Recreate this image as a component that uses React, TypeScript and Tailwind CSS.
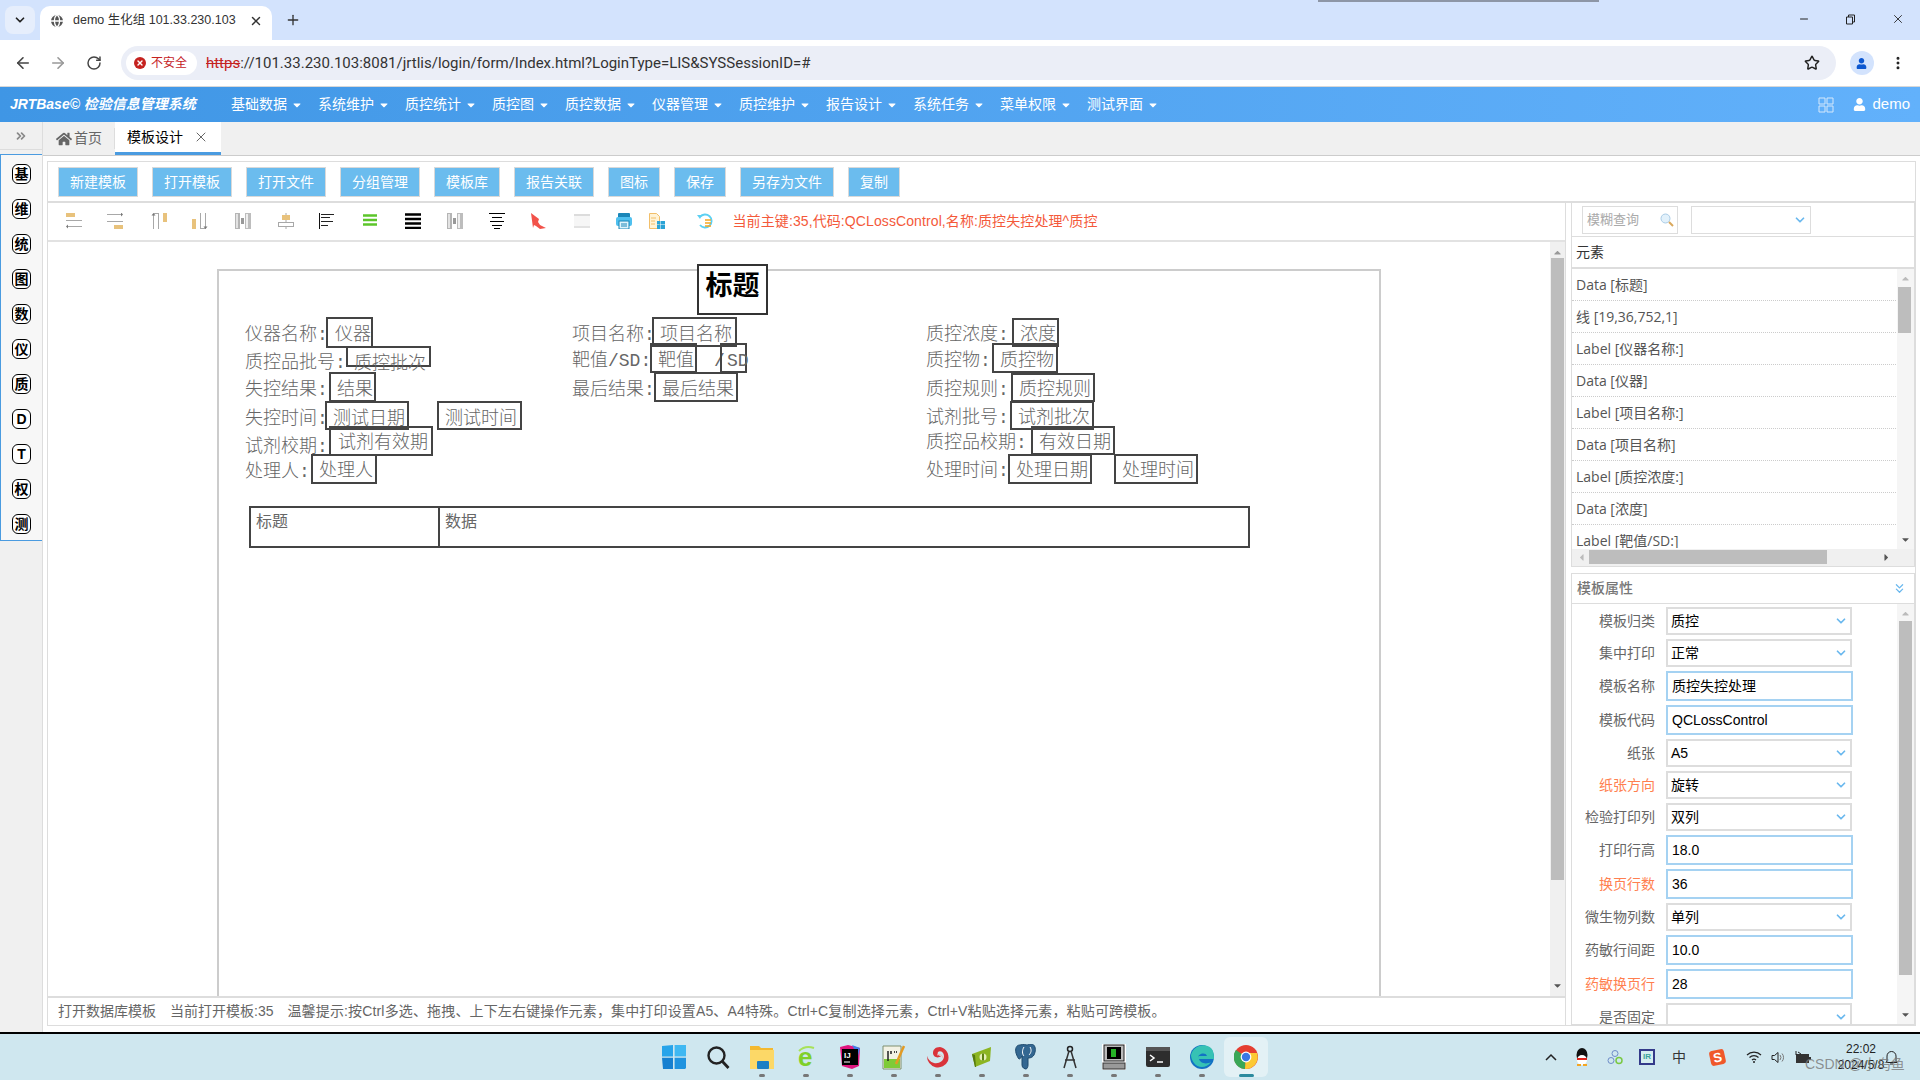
import React from 'react';
import { ArrowLeft, ArrowRight, ChevronDown, ChevronsDown, ChevronsRight, Globe, Minus, MoreVertical, Plus, RotateCw, Star, X } from 'lucide-react';
import { FaHome, FaUser, FaCaretDown, FaCaretUp, FaCaretLeft, FaCaretRight } from 'react-icons/fa';

const menus = ['基础数据', '系统维护', '质控统计', '质控图', '质控数据', '仪器管理', '质控维护', '报告设计', '系统任务', '菜单权限', '测试界面'];
const sideItems = ['基', '维', '统', '图', '数', '仪', '质', 'D', 'T', '权', '测'];
const buttons = ['新建模板', '打开模板', '打开文件', '分组管理', '模板库', '报告关联', '图标', '保存', '另存为文件', '复制'];
const elements = ['Data [标题]', '线 [19,36,752,1]', 'Label [仪器名称:]', 'Data [仪器]', 'Label [项目名称:]', 'Data [项目名称]', 'Label [质控浓度:]', 'Data [浓度]', 'Label [靶值/SD:]'];

// 工具图标之间的间距
const iconGaps = [0, 25, 27.5, 25, 27, 27, 25, 27, 27, 26, 26, 25, 28, 26.5, 17, 31.5];

const props = [
  { label: '模板归类', value: '质控', select: true },
  { label: '集中打印', value: '正常', select: true },
  { label: '模板名称', value: '质控失控处理' },
  { label: '模板代码', value: 'QCLossControl' },
  { label: '纸张', value: 'A5', select: true },
  { label: '纸张方向', value: '旋转', select: true, warn: true },
  { label: '检验打印列', value: '双列', select: true },
  { label: '打印行高', value: '18.0' },
  { label: '换页行数', value: '36', warn: true },
  { label: '微生物列数', value: '单列', select: true },
  { label: '药敏行间距', value: '10.0' },
  { label: '药敏换页行', value: '28', warn: true },
  { label: '是否固定', value: '', select: true },
];

const labels: [number, number, string][] = [
  [245, 334, '仪器名称:'], [245, 362, '质控品批号:'], [245, 389, '失控结果:'], [245, 418, '失控时间:'], [245, 446, '试剂校期:'], [245, 471, '处理人:'],
  [572, 334, '项目名称:'], [572, 360, '靶值/SD:'], [572, 389, '最后结果:'], [714, 360, '/'],
  [926, 334, '质控浓度:'], [926, 360, '质控物:'], [926, 389, '质控规则:'], [926, 417, '试剂批号:'], [926, 442, '质控品校期:'], [926, 470, '处理时间:'],
];

// [左, 上, 右, 下, 文本x, 文本中心y, 文本]
const boxes: [number, number, number, number, number, number, string][] = [
  [326, 317, 372, 347, 335, 334, '仪器'], [346, 346, 430, 366, 354, 363, '质控批次'], [329, 372, 375, 401, 337, 389, '结果'],
  [325, 401, 408, 429, 333, 418, '测试日期'], [437, 401, 521, 429, 445, 418, '测试时间'], [329, 426, 432, 455, 338, 442, '试剂有效期'], [311, 454, 376, 483, 319, 470, '处理人'],
  [652, 317, 736, 346, 660, 334, '项目名称'], [650, 343, 696, 372, 658, 360, '靶值'], [720, 343, 746, 372, 727, 360, 'SD'], [654, 372, 737, 401, 662, 389, '最后结果'],
  [1012, 318, 1058, 346, 1020, 334, '浓度'], [992, 343, 1057, 372, 1000, 360, '质控物'], [1011, 373, 1094, 401, 1019, 389, '质控规则'], [1010, 401, 1093, 429, 1018, 417, '试剂批次'],
  [1031, 426, 1114, 454, 1039, 442, '有效日期'], [1008, 454, 1091, 483, 1016, 470, '处理日期'], [1114, 454, 1197, 483, 1122, 470, '处理时间'],
];

const ORIGIN_X = 48;
const ORIGIN_Y = 242;

function Bars() {
  return (
    <svg width="16" height="16" viewBox="0 0 16 16">
      <rect x="0" y="0" width="5" height="16" fill="#b5b5b5" />
      <rect x="1" y="1" width="2" height="14" fill="#e3e3e3" />
      <rect x="6" y="5" width="3" height="6" fill="#999" />
      <rect x="10" y="0" width="6" height="16" fill="#bdbdbd" />
      <rect x="11" y="1" width="2" height="14" fill="#efefef" />
    </svg>
  );
}

function ToolIcon({ n }: { n: number }) {
  const tan = '#e8c27c';
  const g = '#a8a8a8';
  if (n === 0) return <svg width="16" height="16" viewBox="0 0 16 16"><rect x="0" y="0" width="9" height="4" fill={tan} /><path d="M0 7.5h16M2 13.5h14" stroke={g} /><path d="M0 13.5l2-2v4z" fill="#777" /></svg>;
  if (n === 1) return <svg width="16" height="16" viewBox="0 0 16 16"><rect x="7" y="12" width="9" height="4" fill={tan} /><path d="M0 1.5h14M0 8.5h16" stroke={g} /><path d="M16 1.5l-2-2v4z" fill="#777" /></svg>;
  if (n === 2) return <svg width="16" height="16" viewBox="0 0 16 16"><rect x="12" y="0" width="4" height="9" fill={tan} /><path d="M2.5 1v15M7.5 0v16M2.500.5h5" stroke={g} /><path d="M2.500 0l-2 2.500h4z" fill="#777" /></svg>;
  if (n === 3) return <svg width="16" height="16" viewBox="0 0 16 16"><rect x="0" y="6" width="4" height="10" fill={tan} /><path d="M8.5 0v15M13.5 0v15M8 15.500h6" stroke={g} /><path d="M13.500 16l-2-2.500h4z" fill="#777" /></svg>;
  if (n === 4 || n === 9) return <Bars />;
  if (n === 5) return <svg width="16" height="16" viewBox="0 0 16 16"><path d="M8 0v16" stroke={g} /><rect x="4" y="2" width="8" height="5" fill={tan} /><rect x=".5" y="9.5" width="15" height="4" fill="#fff" stroke={g} /></svg>;
  if (n === 6) return <svg width="16" height="16" viewBox="0 0 16 16"><path d="M.5 0v16" stroke="#111" /><path d="M2 1.5h13M2 4.5h9M2 8.5h12M2 12.5h7" stroke="#222" /></svg>;
  if (n === 7) return <svg width="16" height="16" viewBox="0 0 16 16"><path d="M1 2.5h14M1 7h14M1 11.5h14" stroke="#5cc52a" strokeWidth="2.4" /></svg>;
  if (n === 8) return <svg width="16" height="16" viewBox="0 0 16 16"><path d="M0 1.5h16M0 6h16M0 10.5h16M0 15h16" stroke="#000" strokeWidth="2.6" /></svg>;
  if (n === 10) return <svg width="16" height="16" viewBox="0 0 16 16"><path d="M0 .5h16M3 4.5h10M1 8.5h14M3 12.5h10M5 15.5h6" stroke="#000" /></svg>;
  if (n === 11) return <svg width="16" height="16" viewBox="0 0 16 16"><path d="M1 0l8 6-1 3 2 3 6 3-6 1-4-3-2-1-1 3z" fill="#f2524a" /></svg>;
  if (n === 12) return <svg width="16" height="16" viewBox="0 0 16 16"><rect x="0" y="2" width="16" height="13" fill="#f6f6f6" /><rect x="0" y="1" width="16" height="2" fill="#dcdcdc" /><rect x="0" y="13" width="16" height="2" fill="#e2e2e2" /></svg>;
  if (n === 13) return <svg width="16" height="16" viewBox="0 0 16 16"><rect x="2" y="0" width="12" height="5" rx="1" fill="#1a86b8" /><rect x="0" y="4" width="16" height="9" rx="2" fill="#4fc0ef" /><rect x="3" y="8" width="10" height="8" fill="#dff3fb" stroke="#1a86b8" /><path d="M5 11h6M5 13h6" stroke="#1a86b8" /></svg>;
  if (n === 14) return <svg width="16" height="16" viewBox="0 0 16 16"><path d="M.5.5h7l3 3v12h-10z" fill="#fff3d6" stroke="#f2bf6a" /><path d="M2 5h5M2 8h4M2 11h4" stroke="#f2bf6a" /><path d="M8 8h3.5v3.5H8zM12 8h4v3.5h-4zM8 12h3.5v4H8zM12 12h4v4h-4z" fill="#2ba3d6" /></svg>;
  return <svg width="16" height="16" viewBox="0 0 16 16"><path d="M3 4a6.5 6.5 0 1 1 0 8" fill="none" stroke="#5cd0f2" strokeWidth="1.8" /><path d="M0 2l5 0-2 4z" fill="#5cd0f2" /><path d="M8 7h6M8 10h6M8 13h6" stroke="#f5a623" strokeWidth="1.5" /></svg>;
}

function TaskIcon({ n }: { n: number }) {
  if (n === 0) return <svg width="24" height="24" viewBox="0 0 24 24"><path d="M0 1l11-1v11.400H0z" fill="#27a4ea" /><path d="M12.600 0L24 0v11.400H12.600z" fill="#3fb8f2" /><path d="M0 12.800h11V24H1z" fill="#1680d0" /><path d="M12.600 12.800H24V23l-1 1H12.600z" fill="#1f93df" /></svg>;
  if (n === 1) return <svg width="24" height="24" viewBox="0 0 24 24"><circle cx="10.500" cy="10.500" r="8" fill="none" stroke="#222" strokeWidth="2.400" /><path d="M16 16l6.500 7" stroke="#222" strokeWidth="2.800" /></svg>;
  if (n === 2) return <svg width="26" height="24" viewBox="0 0 26 24"><path d="M1 1h9l2 2h12v21H1z" fill="#f4b92f" /><path d="M1 5h24v19H1z" fill="#fcd867" /><rect x="8" y="16" width="12" height="8" rx="1" fill="#1b7fc4" /></svg>;
  if (n === 3) return <svg width="24" height="26" viewBox="0 0 24 26" className="overflow-visible"><path d="M20 4q-9-3-15 3" fill="none" stroke="#a8e25a" strokeWidth="2" /><text x="4" y="22" fontSize="26" fontWeight="700" fill="#7fd02a" fontFamily="Liberation Sans">e</text></svg>;
  if (n === 4) return <svg width="24" height="24" viewBox="0 0 24 24"><path d="M2 2l8-2 12 3-1 18-7 3-10-3z" fill="#e0157e" /><path d="M14 0l8 3-2 8z" fill="#3f7ee8" /><rect x="4" y="4" width="16" height="16" fill="#000" /><text x="6" y="13" fill="#fff" fontSize="8" fontWeight="700" fontFamily="Liberation Sans">IJ</text><path d="M6 17h6" stroke="#fff" /></svg>;
  if (n === 5) return <svg width="24" height="26" viewBox="0 0 24 26"><path d="M1 2h18v23H1z" fill="#f2f2e4" stroke="#7f8f6f" /><rect x="2" y="15" width="16" height="9" fill="#7ecb37" /><path d="M6 7v10M9 7v3" stroke="#222" strokeWidth="1.500" /><path d="M12 8h3" stroke="#444" strokeDasharray="1 1" strokeWidth="2" /><path d="M14 20L22 2" stroke="#e39b24" strokeWidth="2.500" /></svg>;
  if (n === 6) return <svg width="24" height="22" viewBox="0 0 24 22"><path d="M1 10a11 11 0 0 0 21 5C24 8 20 2 14 1 9 1 7 4 7 7c0 4 5 6 8 3-3 0-4-2-3-4 2-2 6 0 6 4 0 5-5 8-10 7-4-1-6-4-7-7z" fill="#d9333a" /><path d="M11 9a4 4 0 0 1 6 3" fill="none" stroke="#f6b7b7" /></svg>;
  if (n === 7) return <svg width="22" height="20" viewBox="0 0 22 20"><path d="M1 7l19-7-1 14L4 20z" fill="#8cb521" /><path d="M1 7l3 1 1 12H4z" fill="#567a0f" /><circle cx="12" cy="10" r="3.500" fill="#e4efb7" /><rect x="11" y="6.500" width="2" height="7" fill="#5c8212" /></svg>;
  if (n === 8) return <svg width="22" height="26" viewBox="0 0 22 26"><path d="M5 1C1 1 0 5 1 9c1 3 2 5 3 6 1 0 2-1 3-3v9c0 3 3 4 4 4s2-2 2-4v-7c3 0 6-1 7-6 1-3 0-8-4-8-2 0-3 1-4 1s-3-1-7 0z" fill="#336791" stroke="#1e4a6d" /><path d="M9 3c-2 3-2 7 0 9M15 3c2 3 1 6-1 8" fill="none" stroke="#fff" /></svg>;
  if (n === 9) return <svg width="16" height="24" viewBox="0 0 16 24"><circle cx="8" cy="4" r="2.500" fill="none" stroke="#222" strokeWidth="1.500" /><path d="M7 6L2 23M9 6l5 17M3 15h10" stroke="#333" strokeWidth="1.500" fill="none" /></svg>;
  if (n === 10) return <svg width="24" height="26" viewBox="0 0 24 26"><rect x="0" y="0" width="24" height="26" fill="#fff" /><rect x="2" y="1" width="20" height="16" fill="#bbb" stroke="#222" /><rect x="5" y="3" width="14" height="12" fill="#000" /><rect x="9" y="5" width="5" height="8" fill="#2fe02f" opacity=".8" /><rect x="1" y="19" width="22" height="6" fill="#999" stroke="#333" /></svg>;
  if (n === 11) return <svg width="24" height="20" viewBox="0 0 24 20"><rect width="24" height="20" rx="2" fill="#2d2d2d" /><rect width="24" height="4" fill="#555" /><path d="M4 8l4 3-4 3" fill="none" stroke="#fff" strokeWidth="1.500" /><path d="M11 15h6" stroke="#fff" strokeWidth="1.500" /></svg>;
  if (n === 12) return <svg width="24" height="26" viewBox="0 0 24 26"><circle cx="12" cy="13" r="12" fill="#1272c4" /><path d="M1 11C3 2 14-2 21 4c3 3 3 8 3 11H9c1 4 7 6 12 3-4 6-13 7-17 1-3-4-3-8-3-8z" fill="#36c2b4" /><path d="M8 14c0-5 8-6 9-2H8z" fill="#1272c4" /></svg>;
  return <svg width="24" height="26" viewBox="0 0 24 24"><circle cx="12" cy="12" r="12" fill="#e53e30" /><path d="M12 12L2 5a12 12 0 0 0 9 19z" fill="#3aa757" /><path d="M12 8h11a12 12 0 0 1-12 16z" fill="#fcc934" /><circle cx="12" cy="12" r="5.400" fill="#fff" /><circle cx="12" cy="12" r="4.200" fill="#3b78e7" /></svg>;
}

function Chevron() {
  return <ChevronDown size={14} strokeWidth={3} className="text-[#6ab8ee]" />;
}

function PropRow({ label, value, select, warn }: { label: string; value: string; select?: boolean; warn?: boolean }) {
  return (
    <div className="flex items-center shrink-0">
      <div className={`w-[82px] text-right text-[14px] ${warn ? 'text-[#ff7f50]' : 'text-[#666]'}`}>{label}</div>
      {select ? (
        <div className="ml-[11px] w-[186px] h-[28px] border-2 border-[#ddd] flex items-center justify-between pl-[3px] pr-[2px] text-[14px] text-black bg-white">
          <span>{value}</span>
          <Chevron />
        </div>
      ) : (
        <div className="ml-[11px] w-[187px] h-[30px] border-2 border-[#a5d2f2] flex items-center pl-[4px] text-[14px] text-black bg-white">{value}</div>
      )}
    </div>
  );
}

export default function App() {
  return (
    <div className="relative w-[1920px] h-[1080px] overflow-hidden flex flex-col bg-white text-[14px] font-['Liberation_Sans','Noto_Sans_CJK_SC',sans-serif]">
      {/* 浏览器标签栏 */}
      <div className="relative h-[40px] shrink-0 bg-[#d3e3fd] flex items-end pl-[5px]">
        <div className="absolute left-[1318px] top-0 w-[281px] h-[2px] bg-[#8d96a6]" />
        <div className="w-[30px] h-[28px] mb-[6px] rounded-lg bg-[#e6eefc] flex items-center justify-center">
          <ChevronDown size={14} strokeWidth={3} className="text-[#222]" />
        </div>
        <div className="ml-[5px] w-[232px] h-[34px] bg-white rounded-t-[10px] flex items-center pl-[9px] pr-[9px] pb-[5px]">
          <Globe size={16} className="text-white fill-[#555]" />
          <span className="ml-[8px] text-[12.5px] text-[#333] flex-1 whitespace-nowrap">demo 生化组 101.33.230.103</span>
          <X size={14} strokeWidth={2.5} className="text-[#333]" />
        </div>
        <Plus size={16} strokeWidth={2} className="ml-[13px] mb-[12px] text-[#333]" />
        <div className="ml-auto mb-[14px] flex items-center gap-[35px] pr-[15px] text-[#222]">
          <Minus size={12} strokeWidth={2} />
          <svg width="11" height="11" viewBox="0 0 11 11"><path d="M1.500 3h6v7h-6zM3.500 3V1h6v7h-2" fill="none" stroke="#222" /></svg>
          <X size={14} strokeWidth={1.5} />
        </div>
      </div>
      {/* 地址栏 */}
      <div className="h-[47px] shrink-0 bg-white border-b border-[#d8d8d8] flex items-center pl-[14px] pr-[14px] text-[#444]">
        <ArrowLeft size={18} strokeWidth={2.2} />
        <ArrowRight size={18} strokeWidth={2.2} className="ml-[17px] text-[#999]" />
        <RotateCw size={16} strokeWidth={2.2} className="ml-[19px]" />
        <div className="ml-[19px] w-[1716px] h-[34px] rounded-full bg-[#ebeef7] flex items-center pl-[5px]">
          <div className="w-[71px] h-[24px] rounded-full bg-white flex items-center pl-[8px] text-[12px] text-[#c5221f]">
            <span className="w-[12px] h-[12px] rounded-full bg-[#c5221f] text-white flex items-center justify-center"><X size={8} strokeWidth={4} /></span>
            <span className="ml-[5px]">不安全</span>
          </div>
          <div className="ml-[9px] text-[15px] text-[#333] font-['Roboto',sans-serif] flex-1 whitespace-nowrap">
            <span className="text-[#c5221f] line-through">https</span>://101.33.230.103:8081/jrtlis/login/form/Index.html?LoginType=LIS&amp;SYSSessionID=#
          </div>
          <Star size={16} strokeWidth={2.2} className="mr-[16px] text-[#222]" />
        </div>
        <div className="ml-[14px] w-[24px] h-[24px] rounded-full bg-[#d3e3fd] flex items-center justify-center text-[#0b57d0]"><FaUser size={11} /></div>
        <MoreVertical size={16} strokeWidth={2.5} className="ml-[16px] text-[#222]" />
      </div>
      {/* 系统导航 */}
      <div className="h-[35px] shrink-0 bg-linear-to-r from-[#3f96e5] to-[#62b1fb] text-white flex items-center">
        <div className="w-[231px] pl-[10px] font-bold italic text-[14px] whitespace-nowrap">JRTBase© 检验信息管理系统</div>
        <div className="flex items-center">
          {menus.map((m) => (
            <div key={m} className="flex items-center pr-[9px] text-[14px] whitespace-nowrap">
              {m}
              <FaCaretDown size={12} className="ml-[4px] mr-[6px]" />
            </div>
          ))}
        </div>
        <div className="ml-auto flex items-center pr-[10px]">
          <svg width="16" height="16" viewBox="0 0 16 16" className="mr-[19px]"><path d="M1 1h6v6H1zM9 1h6v6H9zM1 9h6v6H1zM9 9h6v6H9z" fill="none" stroke="#d5e8fb" /></svg>
          <FaUser size={13} />
          <span className="ml-[6px] text-[15px]">demo</span>
        </div>
      </div>
      {/* 主体 */}
      <div className="flex-1 min-h-0 flex bg-[#f0f0f0]">
        {/* 左侧收缩栏 */}
        <div className="w-[43px] shrink-0 border-r border-[#ddd] flex flex-col">
          <div className="h-[28px] border-b border-[#ddd] flex items-center justify-center">
            <ChevronsRight size={14} strokeWidth={3} className="text-[#888]" />
          </div>
          <div className="mt-[4px] h-[387px] bg-[#f7f7f7] border-y border-l border-[#4a9be0] flex flex-col items-center gap-[15px] pt-[9px]">
            {sideItems.map((s) => (
              <div key={s} className="w-[19px] h-[20px] shrink-0 border border-black rounded-[6px] flex items-center justify-center text-[14px] font-bold text-black bg-white">{s}</div>
            ))}
          </div>
        </div>
        <div className="flex-1 min-w-0 flex flex-col">
          {/* 页签 */}
          <div className="h-[34px] shrink-0 border-b border-[#ccc] flex items-stretch">
            <div className="w-[71px] flex items-center pl-[13px] text-[#666]">
              <FaHome size={16} />
              <span className="ml-[2px] text-[14px]">首页</span>
            </div>
            <div className="w-[1px] my-[6px] bg-[#ddd]" />
            <div className="w-[106px] bg-white border-b-[3px] border-[#4a9be0] flex items-center pl-[12px] text-black">
              <span>模板设计</span>
              <X size={16} strokeWidth={1.5} className="ml-[10px] text-[#666]" />
            </div>
          </div>
          {/* 工作区 */}
          <div className="flex-1 min-h-0 bg-white pl-[4px] pr-[4px] pt-[5px] pb-[6px] flex flex-col">
            <div className="flex-1 min-h-0 border border-[#ddd] flex flex-col">
              <div className="h-[41px] shrink-0 border-b-2 border-[#ddd] flex items-center gap-[14px] pl-[10px] pt-[1px]">
                {buttons.map((b) => (
                  <div key={b} className="h-[30px] px-[11px] border border-[#d9d9d9] bg-[#6bbcee] text-white text-[14px] flex items-center">{b}</div>
                ))}
              </div>
              <div className="flex-1 min-h-0 flex">
                {/* 设计区 */}
                <div className="w-[1518px] shrink-0 border-r border-[#ddd] flex flex-col">
                  <div className="h-[39px] shrink-0 border-b-2 border-[#e2e2e2] flex items-center pl-[18px] pb-[1px]">
                    {iconGaps.map((gap, i) => (
                      <div key={i} className="w-[16px] h-[16px] shrink-0" style={{ marginLeft: gap }}>
                        <ToolIcon n={i} />
                      </div>
                    ))}
                    <span className="ml-[20px] text-[14px] text-[#f4593a] whitespace-nowrap tracking-[0.1px]">当前主键:35,代码:QCLossControl,名称:质控失控处理^质控</span>
                  </div>
                  <div className="relative flex-1 min-h-0 overflow-hidden">
                    {/* 打印纸 */}
                    <div className="absolute left-[169px] top-[27px] w-[1164px] h-[800px] border-2 border-[#ccc] bg-white border-b-0" />
                    <div className="absolute flex items-center justify-center border-2 border-[#333] bg-white text-[27px] font-bold text-black pb-[6px]" style={{ left: 697 - ORIGIN_X, top: 264 - ORIGIN_Y, width: 71, height: 51 }}>标题</div>
                    {labels.map(([x, y, t]) => (
                      <div key={`${x}-${y}`} className="absolute text-[18px] leading-[24px] font-light text-[#666] whitespace-nowrap font-['Liberation_Mono','Noto_Sans_CJK_SC',monospace]" style={{ left: x - ORIGIN_X, top: y - 11 - ORIGIN_Y }}>{t}</div>
                    ))}
                    {boxes.map(([l, t, r, b, tx, ty, s]) => (
                      <React.Fragment key={`${l}-${t}`}>
                        <div className="absolute border-2 border-[#444]" style={{ left: l - ORIGIN_X, top: t - ORIGIN_Y, width: r - l + 1, height: b - t + 1 }} />
                        <div className="absolute text-[18px] leading-[24px] font-light text-[#666] whitespace-nowrap font-['Liberation_Mono','Noto_Sans_CJK_SC',monospace]" style={{ left: tx - ORIGIN_X, top: ty - 11 - ORIGIN_Y }}>{s}</div>
                      </React.Fragment>
                    ))}
                    <div className="absolute border-2 border-[#444] flex" style={{ left: 249 - ORIGIN_X, top: 506 - ORIGIN_Y, width: 1001, height: 42 }}>
                      <div className="w-[189px] border-r-2 border-[#444] pl-[5px] pt-[2px] text-[16px] text-[#666]">标题</div>
                      <div className="pl-[5px] pt-[2px] text-[16px] text-[#666]">数据</div>
                    </div>
                    {/* 滚动条 */}
                    <div className="absolute right-0 top-0 bottom-0 w-[15px] bg-[#f0f0f0] flex flex-col items-center justify-between py-[5px]">
                      <FaCaretUp size={11} className="text-[#999]" />
                      <FaCaretDown size={11} className="text-[#555]" />
                      <div className="absolute left-[1px] top-[16px] w-[13px] h-[622px] bg-[#bdbdbd]" />
                    </div>
                  </div>
                  <div className="h-[29px] shrink-0 border-t-2 border-[#ddd] flex items-center pl-[10px] gap-[14px] text-[14px] text-[#666] whitespace-nowrap">
                    <span>打开数据库模板</span>
                    <span>当前打开模板:35</span>
                    <span className="tracking-[0.15px]">温馨提示:按Ctrl多选、拖拽、上下左右键操作元素，集中打印设置A5、A4特殊。Ctrl+C复制选择元素，Ctrl+V粘贴选择元素，粘贴可跨模板。</span>
                  </div>
                </div>
                {/* 右侧面板 */}
                <div className="ml-[5px] flex-1 min-w-0 flex flex-col">
                  <div className="h-[364px] shrink-0 border-l border-r border-b border-[#ddd] flex flex-col">
                    <div className="h-[34px] shrink-0 border-b border-[#ddd] flex items-center pl-[10px] pt-[1px]">
                      <div className="w-[96px] h-[28px] border border-[#ddd] flex items-center justify-between pl-[4px] pr-[3px] text-[13px] text-[#aaa]">
                        <span>模糊查询</span>
                        <svg width="14" height="14" viewBox="0 0 14 14"><circle cx="5.500" cy="5.500" r="4.500" fill="#e2f1fb" stroke="#a9cbe6" /><path d="M9 9l4 4" stroke="#d9a85c" strokeWidth="2" /></svg>
                      </div>
                      <div className="ml-[13px] w-[120px] h-[28px] border border-[#ddd] flex items-center justify-end pr-[3px]"><Chevron /></div>
                    </div>
                    <div className="h-[32px] shrink-0 border-b-2 border-[#ddd] flex items-center pl-[4px] pt-[1px] text-[14px] text-[#333]">元素</div>
                    <div className="relative flex-1 min-h-0 overflow-hidden">
                      <div className="mr-[16px] h-[279px] overflow-hidden font-['Open_Sans','Noto_Sans_CJK_SC',sans-serif]">
                        {elements.map((e) => (
                          <div key={e} className="h-[32px] border-b border-dotted border-[#ccc] flex items-center pl-[4px] text-[14px] text-[#555] whitespace-nowrap">{e}</div>
                        ))}
                      </div>
                      <div className="absolute right-0 top-0 bottom-0 w-[17px] bg-[#f5f5f5] flex flex-col items-center justify-between py-[4px]">
                        <FaCaretUp size={11} className="text-[#bbb]" />
                        <div className="absolute left-[1px] top-[18px] w-[13px] h-[46px] bg-[#bdbdbd]" />
                        <FaCaretDown size={11} className="text-[#555] mb-[17px]" />
                      </div>
                      <div className="absolute left-0 right-0 bottom-0 h-[17px] bg-[#f0f0f0] flex items-center justify-between pl-[4px] pr-[22px]">
                        <FaCaretLeft size={11} className="text-[#bbb]" />
                        <div className="absolute left-[17px] top-[1px] w-[238px] h-[14px] bg-[#bdbdbd]" />
                        <FaCaretRight size={11} className="text-[#555]" />
                      </div>
                    </div>
                  </div>
                  <div className="mt-[6px] flex-1 min-h-0 border border-[#ddd] flex flex-col overflow-hidden">
                    <div className="h-[30px] shrink-0 border-b border-[#ddd] flex items-center justify-between pl-[5px] pr-[7px]">
                      <span className="text-[14px] font-medium text-[#777]">模板属性</span>
                      <ChevronsDown size={15} strokeWidth={2} className="text-[#6ab8ee]" />
                    </div>
                    <div className="relative flex-1 min-h-0 overflow-hidden pt-[3px] pl-[1px] flex flex-col gap-[4px]">
                      {props.map((p) => (
                        <PropRow key={p.label} {...p} />
                      ))}
                      <div className="absolute right-0 top-0 bottom-0 w-[17px] bg-[#f5f5f5] flex flex-col items-center justify-between py-[4px]">
                        <FaCaretUp size={11} className="text-[#bbb]" />
                        <div className="absolute left-[2px] top-[17px] w-[13px] h-[354px] bg-[#bdbdbd]" />
                        <FaCaretDown size={11} className="text-[#555]" />
                      </div>
                    </div>
                  </div>
                </div>
              </div>
            </div>
          </div>
        </div>
      </div>
      {/* 任务栏 */}
      <div className="relative h-[48px] shrink-0 border-t-2 border-black bg-[#cfe7ef] flex items-center justify-between pl-[652px] pr-[22px]">
        <div className="flex items-center">
          {[0, 1, 2, 3, 4, 5, 6, 7, 8, 9, 10, 11, 12, 13].map((n) => (
            <div key={n} className={`relative w-[44px] h-[40px] flex items-center justify-center rounded-md ${n === 13 ? 'bg-[#e3f1f5]' : ''}`}>
              <TaskIcon n={n} />
              {n > 1 && <span className={`absolute bottom-[0px] h-[3px] rounded-full ${n === 13 ? 'w-[15px] bg-[#2b8a9e]' : 'w-[6px] bg-[#777]'}`} />}
            </div>
          ))}
        </div>
        <div className="flex items-center text-[#222]">
          <svg width="12" height="8" viewBox="0 0 12 8"><path d="M1 7l5-5 5 5" fill="none" stroke="#222" strokeWidth="1.500" /></svg>
          <svg width="16" height="18" viewBox="0 0 16 18" className="ml-[17px]"><ellipse cx="8" cy="7" rx="5.500" ry="7" fill="#111" /><ellipse cx="8" cy="12" rx="5" ry="5" fill="#fff" /><path d="M3 10h10v2H3z" fill="#e0231c" /><path d="M3 17h4M9 17h4" stroke="#f5a623" strokeWidth="2" /></svg>
          <svg width="16" height="16" viewBox="0 0 16 16" className="ml-[17px]"><circle cx="8" cy="4.500" r="3" fill="none" stroke="#6e8cc8" /><circle cx="4" cy="11.500" r="3" fill="none" stroke="#6e8cc8" /><circle cx="12" cy="11.500" r="3" fill="none" stroke="#7ac943" strokeWidth="1.500" /></svg>
          <div className="ml-[16px] w-[16px] h-[16px] border-2 border-[#333a8a] bg-[#d5eef0] text-[8px] font-bold text-[#3aa39a] flex items-center justify-center">IR</div>
          <span className="ml-[17px] text-[14px] text-[#333]">中</span>
          <div className="ml-[23.500px] w-[15px] h-[15px] rounded-[3px] bg-[#f0582a] text-white text-[13px] font-bold flex items-center justify-center -rotate-12">S</div>
          <svg width="16" height="12" viewBox="0 0 16 12" className="ml-[21.500px]"><path d="M1 4a10 10 0 0 1 14 0M3.500 6.500a6.500 6.500 0 0 1 9 0M6 9a3 3 0 0 1 4 0" fill="none" stroke="#222" strokeWidth="1.200" /><circle cx="8" cy="11" r="1" fill="#222" /></svg>
          <svg width="15" height="13" viewBox="0 0 15 13" className="ml-[8.500px]"><path d="M1 4.500h2.500L7 1.500v10l-3.500-3H1z" fill="none" stroke="#222" /><path d="M9 4a4 4 0 0 1 0 5M11 2.500a6 6 0 0 1 0 8" fill="none" stroke="#777" /></svg>
          <svg width="16" height="13" viewBox="0 0 16 13" className="ml-[9.500px]"><rect x="1" y="3" width="13" height="9" fill="#333" /><path d="M1 0v4M3 1l3 2" stroke="#222" /><rect x="14" y="6" width="2" height="3" fill="#333" /></svg>
          <div className="ml-[26px] w-[48px] text-center text-[12px] leading-[16px] text-[#222]">
            <div>22:02</div>
            <div>2024/5/8</div>
          </div>
          <svg width="13" height="15" viewBox="0 0 13 15"><path d="M2 11V6a4.500 4.500 0 0 1 9 0v5l1 1.500H1z" fill="none" stroke="#222" /><path d="M5 14h3" stroke="#222" /></svg>
        </div>
        <div className="absolute left-[1805px] top-[20px] text-[14px] text-[#777]/80 whitespace-nowrap">CSDN @小乌鱼</div>
      </div>
    </div>
  );
}
